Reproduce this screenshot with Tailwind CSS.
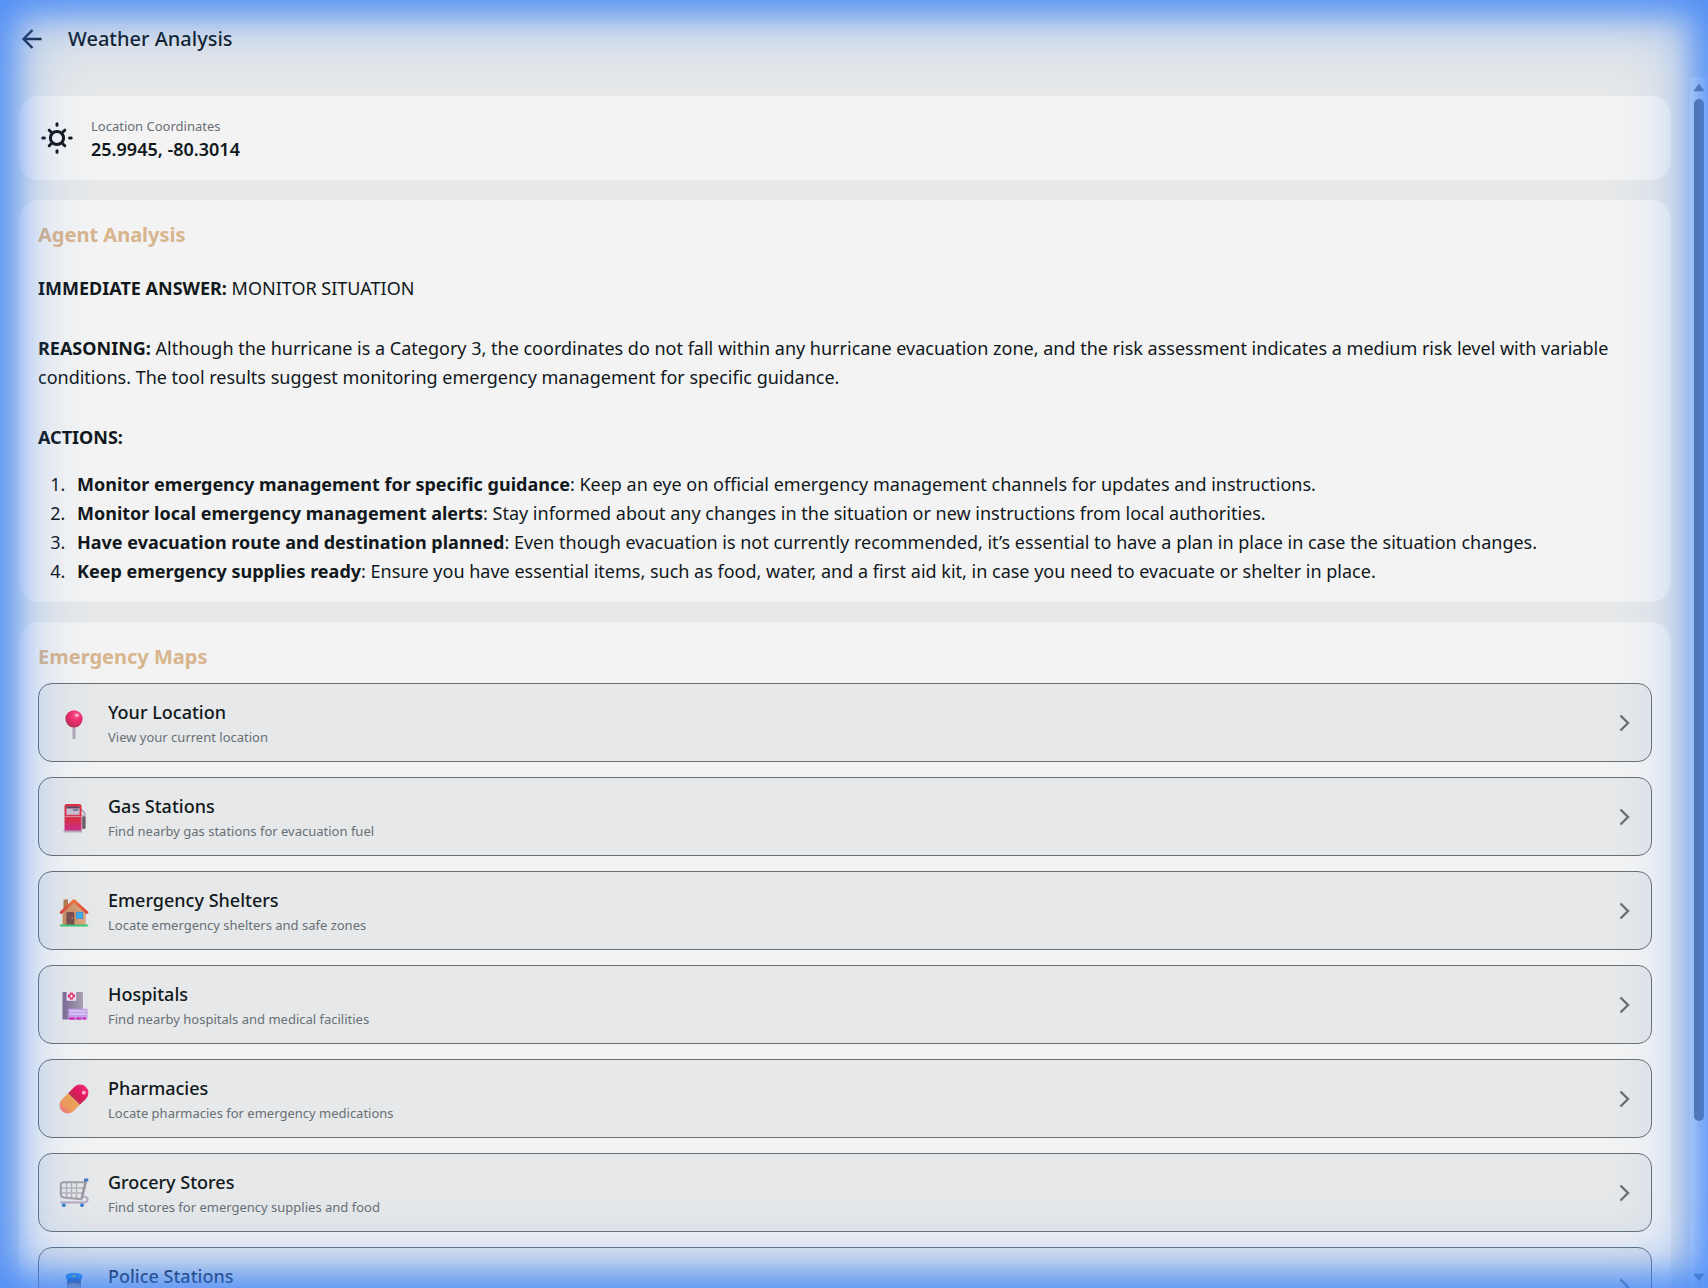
<!DOCTYPE html>
<html lang="en">
<head>
  <meta charset="utf-8">
  <meta name="viewport" content="width=device-width, initial-scale=1">
  <title>Weather Analysis</title>
  <script src="https://cdn.jsdelivr.net/npm/@tailwindcss/browser@4"></script>
</head>
<body class="h-screen overflow-hidden flex flex-col bg-[#e6e8e9] text-[#11181c] font-['Noto_Sans','Open_Sans',sans-serif]">

<header class="flex items-center gap-6 h-[77px] shrink-0 px-5">
  <button type="button" aria-label="Back" class="shrink-0">
    <svg class="w-6 h-6" viewBox="0 0 24 24" fill="none" stroke="#11181c" stroke-width="2.4">
      <path d="M21.5 12H3.5M12.5 3L3.5 12l9 9"/>
    </svg>
  </button>
  <h1 class="text-xl font-medium">Weather Analysis</h1>
</header>

<div class="flex flex-1 min-h-0">
  <main class="flex-1 overflow-hidden p-[19px] flex flex-col gap-5">

    <!-- location -->
    <section class="shrink-0 h-[84px] flex items-center gap-[18px] px-[22px] rounded-[20px] bg-[#f3f3f3]">
      <svg class="w-8 h-8" viewBox="0 0 32 32" fill="none" stroke="#11181c" stroke-width="3" stroke-linecap="round">
        <circle cx="16" cy="16" r="6.6"/>
        <path d="M16 1.8v1.4M16 28.8v1.4M1.8 16h1.6M28.6 16h1.6"/>
        <path d="M8.2 8.2l1.6 1.6M22.2 22.2l1.6 1.6M23.8 8.2l-1.6 1.6M9.8 22.2l-1.6 1.6"/>
      </svg>
      <div class="pt-0.5">
        <p class="text-[13px] leading-5 text-[#687076]">Location Coordinates</p>
        <p class="text-lg leading-[26px] font-semibold">25.9945, -80.3014</p>
      </div>
    </section>

    <!-- analysis -->
    <section class="shrink-0 px-[19px] pt-5 pb-4 rounded-[20px] bg-[#f3f3f3] text-lg leading-[29px]">
      <h2 class="text-xl leading-[30px] font-bold text-[#d7b58d]">Agent Analysis</h2>
      <p class="mt-6"><strong>IMMEDIATE ANSWER:</strong> MONITOR SITUATION</p>
      <p class="mt-[31px]"><strong>REASONING:</strong> Although the hurricane is a Category 3, the coordinates do not fall within any hurricane evacuation zone, and the risk assessment indicates a medium risk level with variable conditions. The tool results suggest monitoring emergency management for specific guidance.</p>
      <p class="mt-[31px]"><strong>ACTIONS:</strong></p>
      <ol class="mt-[18px] pl-8 list-decimal">
        <li class="pl-[7px]"><strong>Monitor emergency management for specific guidance</strong>: Keep an eye on official emergency management channels for updates and instructions.</li>
        <li class="pl-[7px]"><strong>Monitor local emergency management alerts</strong>: Stay informed about any changes in the situation or new instructions from local authorities.</li>
        <li class="pl-[7px]"><strong>Have evacuation route and destination planned</strong>: Even though evacuation is not currently recommended, it’s essential to have a plan in place in case the situation changes.</li>
        <li class="pl-[7px]"><strong>Keep emergency supplies ready</strong>: Ensure you have essential items, such as food, water, and a first aid kit, in case you need to evacuate or shelter in place.</li>
      </ol>
    </section>

    <!-- maps -->
    <section class="shrink-0 px-[19px] pt-5 pb-5 rounded-[20px] bg-[#f3f3f3]">
      <h2 class="text-xl leading-[30px] font-bold text-[#d7b58d]">Emergency Maps</h2>
      <div class="mt-[11px] flex flex-col gap-[15px]">

        <button type="button" class="flex items-center h-[79px] pl-5 pr-[18px] gap-[19px] text-left rounded-[14px] border border-[#687076] bg-[#e6e8e9]">
          <svg class="w-[30px] h-[30px] mt-0.5" viewBox="0 0 30 30">
            <defs><radialGradient id="pin" cx=".62" cy=".3" r=".75"><stop offset="0" stop-color="#ff4f83"/><stop offset=".5" stop-color="#ee2b6c"/><stop offset="1" stop-color="#b3304f"/></radialGradient></defs>
            <rect x="13.6" y="16" width="2.8" height="14" fill="#a79bb0"/>
            <rect x="13.6" y="16" width="1" height="14" fill="#c2b9c9"/>
            <circle cx="15" cy="9.8" r="8.6" fill="url(#pin)"/>
            <ellipse cx="17.8" cy="6.2" rx="2.2" ry="1.8" fill="#ffa9c4"/>
          </svg>
          <span class="flex-1">
            <span class="block text-lg leading-7 font-medium">Your Location</span>
            <span class="block text-[13px] leading-[22px] text-[#687076]">View your current location</span>
          </span>
          <svg class="w-4 h-5" viewBox="0 0 16 20" fill="none" stroke="#687076" stroke-width="2.4"><path d="M3.5 2.5L11 10l-7.5 7.5"/></svg>
        </button>

        <button type="button" class="flex items-center h-[79px] pl-5 pr-[18px] gap-[19px] text-left rounded-[14px] border border-[#687076] bg-[#e6e8e9]">
          <svg class="w-[30px] h-[30px] mt-0.5" viewBox="0 0 30 30">
            <defs><linearGradient id="gas" x1="0" y1="0" x2="0" y2="1"><stop offset="0" stop-color="#e32c3f"/><stop offset=".55" stop-color="#dc2d44"/><stop offset="1" stop-color="#c93089"/></linearGradient></defs>
            <path d="M22 6l3.6 4v5" fill="none" stroke="#aaa3b4" stroke-width="1.8"/>
            <path d="M22 13h2.2v10" fill="none" stroke="#b9b0bd" stroke-width="1.4"/>
            <rect x="23.2" y="13.5" width="3.4" height="12.5" rx="1.2" fill="#6b5d66"/>
            <path d="M5.5 28V3.2Q5.5 1 7.7 1h12.6Q22.5 1 22.5 3.2V28z" fill="url(#gas)"/>
            <rect x="7.4" y="3.4" width="13.2" height="8.4" fill="#c9bfd0"/>
            <rect x="7.4" y="3.4" width="13.2" height="2" fill="#5f3a58"/>
            <path d="M14 7h5" stroke="#53506f" stroke-width="1.2"/>
            <path d="M5.5 13.5h17" stroke="#d98a95" stroke-width="1.2"/>
            <rect x="4.5" y="27.5" width="18.5" height="2" fill="#b9a9b9"/>
          </svg>
          <span class="flex-1">
            <span class="block text-lg leading-7 font-medium">Gas Stations</span>
            <span class="block text-[13px] leading-[22px] text-[#687076]">Find nearby gas stations for evacuation fuel</span>
          </span>
          <svg class="w-4 h-5" viewBox="0 0 16 20" fill="none" stroke="#687076" stroke-width="2.4"><path d="M3.5 2.5L11 10l-7.5 7.5"/></svg>
        </button>

        <button type="button" class="flex items-center h-[79px] pl-5 pr-[18px] gap-[19px] text-left rounded-[14px] border border-[#687076] bg-[#e6e8e9]">
          <svg class="w-[30px] h-[30px] mt-0.5" viewBox="0 0 30 30">
            <defs><linearGradient id="wall"><stop offset="0" stop-color="#c68a5c"/><stop offset="1" stop-color="#dea880"/></linearGradient>
            <linearGradient id="roof" x1="0" y1="0" x2="0" y2="1"><stop offset="0" stop-color="#f0763c"/><stop offset="1" stop-color="#da3b3b"/></linearGradient></defs>
            <rect x="4.5" y="2.5" width="4.5" height="11" fill="#b27a4f"/>
            <path d="M3.6 14L15 4l11.8 10.5V28H3.6z" fill="url(#wall)"/>
            <path d="M1.3 16.2L15 3.6l13.7 12.6" fill="none" stroke="url(#roof)" stroke-width="2.8" stroke-linejoin="round"/>
            <path d="M7.4 28V16.5q0-1.5 1.5-1.5h5q1.5 0 1.5 1.5V28z" fill="#7a4f4b"/>
            <circle cx="13.3" cy="21" r=".7" fill="#d8a05e"/>
            <rect x="17.5" y="15.3" width="6.2" height="6.2" fill="#37b0f4" stroke="#3f8fd0" stroke-width=".8"/>
            <rect x=".7" y="27.4" width="28.6" height="2" rx=".8" fill="#3dc672"/>
          </svg>
          <span class="flex-1">
            <span class="block text-lg leading-7 font-medium">Emergency Shelters</span>
            <span class="block text-[13px] leading-[22px] text-[#687076]">Locate emergency shelters and safe zones</span>
          </span>
          <svg class="w-4 h-5" viewBox="0 0 16 20" fill="none" stroke="#687076" stroke-width="2.4"><path d="M3.5 2.5L11 10l-7.5 7.5"/></svg>
        </button>

        <button type="button" class="flex items-center h-[79px] pl-5 pr-[18px] gap-[19px] text-left rounded-[14px] border border-[#687076] bg-[#e6e8e9]">
          <svg class="w-[30px] h-[30px]" viewBox="0 0 30 30">
            <defs><linearGradient id="hosp"><stop offset="0" stop-color="#7d6a93"/><stop offset="1" stop-color="#a9a1b2"/></linearGradient></defs>
            <path d="M3.5 29.5V3q0-1 1-1H23q1 0 1 1v26.5z" fill="url(#hosp)"/>
            <rect x="7.6" y="1.5" width="9.6" height="9.3" fill="#efdcf2"/>
            <path d="M12.4 2.7v6.8M9 6.1h6.8" stroke="#e0245e" stroke-width="3"/>
            <path d="M12.4 4.5v3.2M10.8 6.1h3.2" stroke="#f7e3f0" stroke-width="1.2"/>
            <rect x="9.3" y="18.8" width="19.2" height="10.7" fill="#c3a2ea"/>
            <path d="M10.5 21h17M10.5 24h17" stroke="#e0cbf8" stroke-width="1.5"/>
            <path d="M10 28.5h5.8M17.2 28.5h5M23.5 28.5h3.5" stroke="#d81fb0" stroke-width="2"/>
          </svg>
          <span class="flex-1">
            <span class="block text-lg leading-7 font-medium">Hospitals</span>
            <span class="block text-[13px] leading-[22px] text-[#687076]">Find nearby hospitals and medical facilities</span>
          </span>
          <svg class="w-4 h-5" viewBox="0 0 16 20" fill="none" stroke="#687076" stroke-width="2.4"><path d="M3.5 2.5L11 10l-7.5 7.5"/></svg>
        </button>

        <button type="button" class="flex items-center h-[79px] pl-5 pr-[18px] gap-[19px] text-left rounded-[14px] border border-[#687076] bg-[#e6e8e9]">
          <svg class="w-[30px] h-[30px]" viewBox="0 0 30 30">
            <defs><linearGradient id="pillTop"><stop offset="0" stop-color="#c42a50"/><stop offset=".5" stop-color="#e3175f"/><stop offset="1" stop-color="#f0307a"/></linearGradient>
            <linearGradient id="pillEnd" x1="1" y1="0" x2="0" y2="0"><stop offset="0" stop-color="#eea556"/><stop offset=".65" stop-color="#f09a5c"/><stop offset="1" stop-color="#f5727c"/></linearGradient></defs>
            <g transform="rotate(-45 15 15)">
              <path d="M15 6.7H6.3a8.3 8.3 0 0 0 0 16.6H15z" fill="url(#pillEnd)"/>
              <path d="M15 6.7h8.7a8.3 8.3 0 0 1 0 16.6H15z" fill="url(#pillTop)"/>
            </g>
            <circle cx="24.8" cy="8.7" r="1.9" fill="#ffb3cf"/>
          </svg>
          <span class="flex-1">
            <span class="block text-lg leading-7 font-medium">Pharmacies</span>
            <span class="block text-[13px] leading-[22px] text-[#687076]">Locate pharmacies for emergency medications</span>
          </span>
          <svg class="w-4 h-5" viewBox="0 0 16 20" fill="none" stroke="#687076" stroke-width="2.4"><path d="M3.5 2.5L11 10l-7.5 7.5"/></svg>
        </button>

        <button type="button" class="flex items-center h-[79px] pl-5 pr-[18px] gap-[19px] text-left rounded-[14px] border border-[#687076] bg-[#e6e8e9]">
          <svg class="w-[30px] h-[30px]" viewBox="0 0 30 30" fill="none">
            <path d="M7.5 5v14.5M12.5 5v15M17.5 5v15.5M2.5 10h22M2.5 15h21" stroke="#b5b1b8" stroke-width="1.5"/>
            <path d="M25.2 4.2H4.5Q1.8 4.2 1.8 7v9q0 3 3 3.4l18 1.8" stroke="#a39ea6" stroke-width="2"/>
            <path d="M27 2.5L22.6 21" stroke="#9b959e" stroke-width="2.6"/>
            <path d="M23.5 18.5c6.500-1 6.700 6 1.500 6H1" stroke="#b6a5bf" stroke-width="2"/>
            <path d="M25 2h4.300" stroke="#3a78c8" stroke-width="2.8"/>
            <circle cx="4.8" cy="27.2" r="1.9" fill="#3b7cd0"/>
            <circle cx="23" cy="27.2" r="1.9" fill="#3b7cd0"/>
          </svg>
          <span class="flex-1">
            <span class="block text-lg leading-7 font-medium">Grocery Stores</span>
            <span class="block text-[13px] leading-[22px] text-[#687076]">Find stores for emergency supplies and food</span>
          </span>
          <svg class="w-4 h-5" viewBox="0 0 16 20" fill="none" stroke="#687076" stroke-width="2.4"><path d="M3.5 2.5L11 10l-7.5 7.5"/></svg>
        </button>

        <button type="button" class="flex items-center h-[79px] pl-5 pr-[18px] gap-[19px] text-left rounded-[14px] border border-[#687076] bg-[#e6e8e9]">
          <svg class="w-[30px] h-[30px]" viewBox="0 0 30 30">
            <path d="M5 29.5q0-8 10-8t10 8z" fill="#2f6fc4"/>
            <path d="M8 8h14v7q0 7-7 7t-7-7z" fill="#a8927c"/>
            <path d="M8 9h14v3H8z" fill="#5a4a48"/>
            <path d="M9.5 12.5q5.5-2.5 11 0v4h-11z" fill="#b59d84"/>
            <path d="M6.5 4.5Q6.5 1 15 1t8.5 3.500q0 2-2 3.500h-13q-2-1.500-2-3.500z" fill="#1c8ae0"/>
            <path d="M8.5 7q6.500-2 13 0v3.500q-6.500-2.500-13 0z" fill="#1b4f9c"/>
            <circle cx="15" cy="4" r="1.3" fill="#d9b84a"/>
          </svg>
          <span class="flex-1">
            <span class="block text-lg leading-7 font-medium">Police Stations</span>
            <span class="block text-[13px] leading-[22px] text-[#687076]">Find nearby police stations</span>
          </span>
          <svg class="w-4 h-5" viewBox="0 0 16 20" fill="none" stroke="#687076" stroke-width="2.4"><path d="M3.5 2.5L11 10l-7.5 7.5"/></svg>
        </button>

      </div>
    </section>
  </main>

  <!-- scrollbar -->
  <div class="w-[18px] shrink-0 flex flex-col items-center py-[6px] bg-[#f8f8f8]" aria-hidden="true">
    <svg class="w-3 h-[9px]" viewBox="0 0 12 9"><path d="M6 1.2L10.8 7.8H1.2z" fill="#6c6c6c" stroke="#6c6c6c" stroke-linejoin="round"/></svg>
    <div class="flex-1 w-full pt-[7px] pb-[6px]">
      <div class="mx-auto w-[10px] h-7/8 rounded-full bg-[#6c6c6c]"></div>
    </div>
    <svg class="w-3 h-[9px]" viewBox="0 0 12 9"><path d="M6 7.8L1.2 1.2h9.6z" fill="#6c6c6c" stroke="#6c6c6c" stroke-linejoin="round"/></svg>
  </div>
</div>

<!-- glow round the window -->
<div class="fixed inset-0 pointer-events-none shadow-[inset_0_0_30px_14px_#3b82f6b3,inset_0_0_80px_#3b82f6b3]"></div>

</body>
</html>
